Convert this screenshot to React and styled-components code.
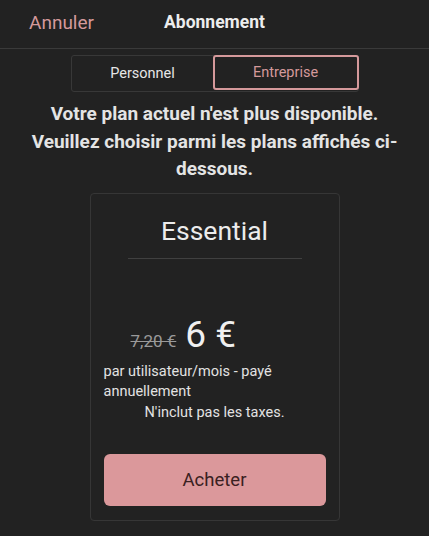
import styled, { createGlobalStyle } from "styled-components"

const Global = createGlobalStyle`
    html, body {
        margin: 0;
        background: #222222;
        font-family: Roboto, "Noto Sans", sans-serif;
    }
`

const Page = styled.div`
    width: 429px;
    height: 536px;
    background: #222222;
    overflow: hidden;
    display: flex;
    flex-direction: column;
`

const Header = styled.header`
    height: 49px;
    flex-shrink: 0;
    border-bottom: 1px solid #3a3a3a;
    display: grid;
    grid-template-columns: 1fr auto 1fr;
    align-items: center;
    padding: 0 29px;
    box-sizing: border-box;
`

const Cancel = styled.button`
    justify-self: start;
    background: none;
    border: none;
    padding: 0;
    font-family: inherit;
    font-size: 19px;
    color: #d5999b;
    margin-top: -4px;
`

const Title = styled.h1`
    margin: -4px 0 0;
    font-size: 17.5px;
    font-weight: 700;
    color: #ededed;
`

const Tabs = styled.div`
    display: flex;
    width: 286px;
    margin: 6px auto 0;
    border: 1px solid #383838;
    border-radius: 3px;
`

const Tab = styled.button`
    flex: 1;
    height: 35px;
    background: none;
    font-family: inherit;
    font-size: 14.5px;
    color: ${p => (p.$active ? "#d5999b" : "#e6e6e6")};
    border: ${p => (p.$active ? "2px solid #d5999b" : "none")};
    border-radius: 3px;
    margin: ${p => (p.$active ? "-1px" : "0")};
`

const Notice = styled.p`
    margin: 8px 28px 0;
    text-align: center;
    font-size: 19px;
    font-weight: 700;
    line-height: 27.5px;
    color: #e4e4e4;
`

const Card = styled.section`
    width: 250px;
    margin: 10px auto 0;
    border: 1px solid #363636;
    border-radius: 4px;
    padding: 0 13px 14px;
    box-sizing: border-box;
    display: flex;
    flex-direction: column;
`

const PlanName = styled.h2`
    margin: 21px 24px 0;
    padding-bottom: 12px;
    border-bottom: 1px solid #404040;
    text-align: center;
    font-size: 26.5px;
    font-weight: 400;
    color: #ececec;
`

const PriceRow = styled.div`
    display: flex;
    align-items: baseline;
    gap: 9px;
    margin: 54px 0 0 27px;
`

const OldPrice = styled.span`
    font-size: 17px;
    color: #9a9a9a;
    text-decoration: line-through;
`

const Price = styled.span`
    font-size: 37px;
    color: #f0f0f0;
`

const Small = styled.p`
    margin: ${p => (p.$center ? "0" : "6px 0 0")};
    font-size: 14.5px;
    line-height: 20.5px;
    color: #e2e2e2;
    text-align: ${p => (p.$center ? "center" : "left")};
`

const Buy = styled.button`
    margin-top: 31px;
    height: 52px;
    border: none;
    border-radius: 6px;
    background: #db989b;
    font-family: inherit;
    font-size: 18.5px;
    color: #3a2021;
`

export default function App() {
    return (
        <Page>
            <Global />
            <Header>
                <Cancel>Annuler</Cancel>
                <Title>Abonnement</Title>
                <span />
            </Header>
            <Tabs>
                <Tab>Personnel</Tab>
                <Tab $active>Entreprise</Tab>
            </Tabs>
            <Notice>
                Votre plan actuel n'est plus disponible. Veuillez choisir parmi les plans affichés ci-dessous.
            </Notice>
            <Card>
                <PlanName>Essential</PlanName>
                <PriceRow>
                    <OldPrice>7,20 €</OldPrice>
                    <Price>6 €</Price>
                </PriceRow>
                <Small>par utilisateur/mois - payé annuellement</Small>
                <Small $center>N'inclut pas les taxes.</Small>
                <Buy>Acheter</Buy>
            </Card>
        </Page>
    )
}
